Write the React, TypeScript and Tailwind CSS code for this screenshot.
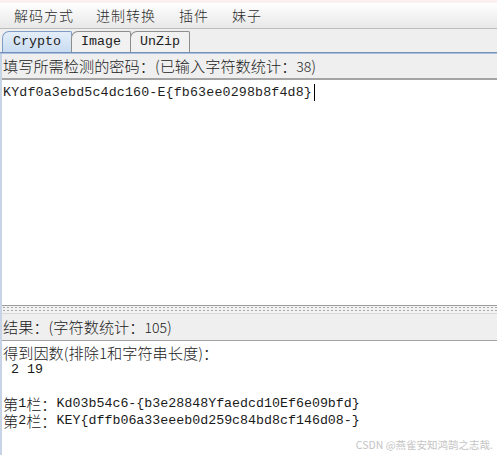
import React from "react";

const cjk = '"Noto Sans CJK SC", "Noto Sans", sans-serif';
const mono = '"Liberation Mono", "DejaVu Sans Mono", monospace';

function M({ children }: { children: React.ReactNode }) {
  return (
    <span className="text-[13.3px] font-normal text-[#1a1a1a]" style={{ fontFamily: mono }}>
      {children}
    </span>
  );
}

function Row({ children, className = "" }: { children?: React.ReactNode; className?: string }) {
  return <div className={"h-[17px] flex items-center whitespace-pre leading-none " + className}>{children}</div>;
}

function Tab({ label, active }: { label: string; active?: boolean }) {
  return (
    <div
      className={
        "h-[21px] flex items-center justify-center text-[13.3px] text-[#222] border border-b-0 rounded-tl-[7px] rounded-tr-[2px] " +
        (active
          ? "w-[70px] bg-gradient-to-b from-[#e4eef9] to-[#c9dcf1] border-[#7f9dc4] ml-[2px]"
          : "w-[60px] bg-[#f1f1f1] border-[#8d8d8d] -ml-px")
      }
      style={{ fontFamily: mono }}
    >
      {label}
    </div>
  );
}

export default function App() {
  return (
    <div
      className="w-[497px] h-[455px] overflow-hidden bg-[#efefef] flex flex-col text-[#1e1e1e]"
      style={{ fontFamily: cjk }}
    >
      <div className="h-[3px] bg-[#fbeff1]" />
      <div className="h-[26px] bg-gradient-to-b from-[#ffffff] to-[#e8e8e8] border-b border-[#bdbdbd] flex items-center text-[14px] font-light text-[#2a2a2a]">
        <span className="ml-[14px] tracking-[1px]">解码方式</span>
        <span className="ml-[22px] tracking-[1px]">进制转换</span>
        <span className="ml-[23px] tracking-[1px]">插件</span>
        <span className="ml-[23px] tracking-[1px]">妹子</span>
      </div>
      <div className="h-[2px]" />
      <div className="flex items-end h-[21px]">
        <Tab label="Crypto" active />
        <Tab label="Image" />
        <Tab label="UnZip" />
      </div>
      <div className="h-[2px] bg-[#7391bb] border-b border-[#a9bfdc]" />
      <div className="flex flex-col flex-1 border-l-2 border-[#c6d4e6]">
        <div className="h-[24px] flex items-center pl-[1px] text-[15.2px] font-light leading-none text-[#222]">
          填写所需检测的密码：(已输入字符数统计：<span className="text-[14px]">38</span>)
        </div>
        <div className="h-[227px] bg-white border-t-2 border-[#a4a4a4] pt-[4px] pl-[1px]">
          <div className="flex items-center h-[17px] leading-none">
            <span className="text-[13.3px] tracking-[0.15px]" style={{ fontFamily: mono }}>
              KYdf0a3ebd5c4dc160-E{"{"}fb63ee0298b8f4d8{"}"}
            </span>
            <span className="inline-block w-px h-[17px] bg-black ml-[2px]" />
          </div>
        </div>
        <div className="h-[8px] border-t border-[#9c9c9c] bg-[radial-gradient(circle,#a8a8a8_0.7px,transparent_0.9px)] bg-[length:4px_3px] bg-[#f3f3f3]" />
        <div className="h-[27px] flex items-center pl-[1px] text-[15.2px] font-light leading-none text-[#222] border-t border-[#d8d8d8]">
          结果：(字符数统计：<span className="text-[14px]">105</span>)
        </div>
        <div className="relative flex-1 bg-white border-t border-[#a4a4a4] pt-[3px] pl-[1px] text-[15.2px] font-light text-[#222]">
          <Row>得到因数(排除1和字符串长度)：</Row>
          <Row className="pl-[8px]"><M>2 19</M></Row>
          <Row />
          <Row>
            <span>第</span>
            <M>1</M>
            <span>栏：</span>
            <M>Kd03b54c6-{"{"}b3e28848Yfaedcd10Ef6e09bfd{"}"}</M>
          </Row>
          <Row>
            <span>第</span>
            <M>2</M>
            <span>栏：</span>
            <M>KEY{"{"}dffb06a33eeeb0d259c84bd8cf146d08-{"}"}</M>
          </Row>
          <div
            className="absolute right-[4px] bottom-[5px] text-[10.5px] leading-none font-normal text-[#c4c4c4]"
            style={{ fontFamily: cjk }}
          >
            CSDN @燕雀安知鸿鹄之志哉.
          </div>
        </div>
      </div>
    </div>
  );
}
